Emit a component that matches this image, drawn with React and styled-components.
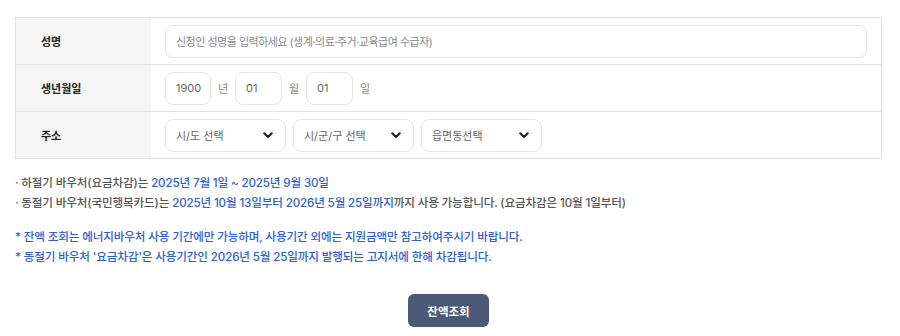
import React from "react"
import styled, { createGlobalStyle } from "styled-components"

const Global = createGlobalStyle`
  body {
    margin: 0;
    background: #fff;
    font-family: Inter, "Noto Sans CJK KR", sans-serif;
  }
`

const Wrap = styled.div`
  width: 867px;
  padding: 17px 0 0 15px;
`

const Table = styled.div`
  border: 1px solid #e2e2e2;
  border-bottom: none;
`

const Row = styled.div`
  display: flex;
  height: 46px;
  border-bottom: 1px solid #e2e2e2;
`

const Label = styled.div`
  width: 110px;
  padding-left: 25px;
  background: #f6f6f6;
  display: flex;
  align-items: center;
  font-size: 11px;
  font-weight: 700;
  color: #222;
`

const Cell = styled.div`
  flex: 1;
  display: flex;
  align-items: center;
  gap: 7px;
  padding: 0 14px;
`

const Field = styled.div`
  box-sizing: border-box;
  height: 33px;
  width: ${p => (p.$w ? `${p.$w}px` : "100%")};
  border: 1px solid #e4e4e4;
  border-radius: 8px;
  display: flex;
  align-items: center;
  padding: 0 10px;
  font-size: 11px;
  letter-spacing: ${p => (p.$dark ? "0" : "-0.5px")};
  color: ${p => (p.$dark ? "#666" : "#888")};
`

const Unit = styled.span`
  font-size: 11px;
  color: #888;
  width: 10px;
  text-align: center;
`

const Select = styled.div`
  box-sizing: border-box;
  width: 121px;
  height: 33px;
  border: 1px solid #e4e4e4;
  border-radius: 8px;
  display: flex;
  align-items: center;
  justify-content: space-between;
  padding: 0 12px 0 10px;
  font-size: 11px;
  color: #666;
`

const Selects = styled.div`
  display: flex;
  gap: 7px;
`

const Notes = styled.div`
  margin-top: 14px;
  font-size: 11.6px;
  font-weight: 500;
  letter-spacing: -0.15px;
  line-height: 20px;
  color: #555;
`

const Line = styled.div`
  color: ${p => (p.$blue ? "#2e60d2" : "#555")};
  ${p => p.$gap && "margin-top: 14px;"}
`

const Blue = styled.span`
  color: #2e60d2;
`

const ButtonRow = styled.div`
  display: flex;
  justify-content: center;
  margin-top: 27px;
`

const Button = styled.button`
  width: 81px;
  height: 33px;
  border: none;
  border-radius: 6px;
  background: #4b5977;
  color: #fff;
  font-family: inherit;
  font-size: 11.5px;
  font-weight: 700;
`

const Chevron = () => (
  <svg width="10" height="7" viewBox="0 0 10 7">
    <path d="M1.3 1.3 L5 5 L8.7 1.3" fill="none" stroke="#222" strokeWidth="2.2" strokeLinecap="round" strokeLinejoin="round" />
  </svg>
)

const App = () => (
  <Wrap>
    <Global />
    <Table>
      <Row>
        <Label>성명</Label>
        <Cell>
          <Field>신청인 성명을 입력하세요 (생계·의료·주거·교육급여 수급자)</Field>
        </Cell>
      </Row>
      <Row>
        <Label>생년월일</Label>
        <Cell>
          <Field $w={46} $dark>1900</Field>
          <Unit>년</Unit>
          <Field $w={47} $dark>01</Field>
          <Unit>월</Unit>
          <Field $w={47} $dark>01</Field>
          <Unit>일</Unit>
        </Cell>
      </Row>
      <Row>
        <Label>주소</Label>
        <Cell>
          <Selects>
            {["시/도 선택", "시/군/구 선택", "읍면동선택"].map(s => (
              <Select key={s}>
                <span>{s}</span>
                <Chevron />
              </Select>
            ))}
          </Selects>
        </Cell>
      </Row>
    </Table>
    <Notes>
      <Line>· 하절기 바우처(요금차감)는 <Blue>2025년 7월 1일 ~ 2025년 9월 30일</Blue></Line>
      <Line>· 동절기 바우처(국민행복카드)는 <Blue>2025년 10월 13일부터 2026년 5월 25일까지</Blue>까지 사용 가능합니다. (요금차감은 10월 1일부터)</Line>
      <Line $blue $gap>* 잔액 조회는 에너지바우처 사용 기간에만 가능하며, 사용기간 외에는 지원금액만 참고하여주시기 바랍니다.</Line>
      <Line $blue>* 동절기 바우처 '요금차감'은 사용기간인 2026년 5월 25일까지 발행되는 고지서에 한해 차감됩니다.</Line>
    </Notes>
    <ButtonRow>
      <Button>잔액조회</Button>
    </ButtonRow>
  </Wrap>
)

export default App
